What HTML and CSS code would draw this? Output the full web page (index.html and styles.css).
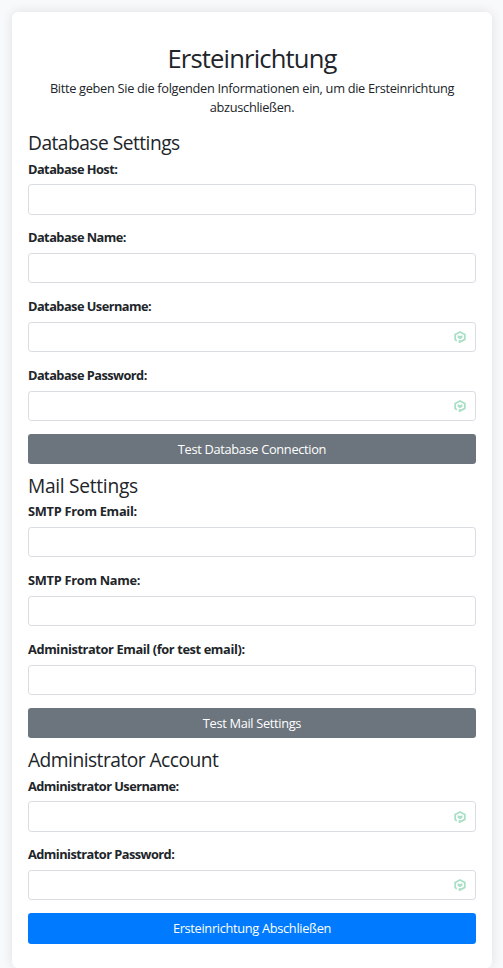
FILE: index.html
```html
<!DOCTYPE html>
<html lang="de">
<head>
<meta charset="utf-8">
<title>Ersteinrichtung</title>
<link rel="stylesheet" href="styles.css">
</head>
<body>
<svg class="sprite" aria-hidden="true">
  <symbol id="key" viewBox="0 0 12 12">
    <path d="M2.9 9.6L1.2 8.6V3.5L6 1l4.8 2.5v4.9L5.6 11.2V8.9" fill="none" stroke="currentColor" stroke-width="1.8"/>
    <path d="M3.6 4.3l2.4.7 2.4-.7v2.5L6 8.2 3.6 6.8z" fill="currentColor"/>
  </symbol>
</svg>
<main class="card">
  <header class="intro">
    <h2>Ersteinrichtung</h2>
    <p>Bitte geben Sie die folgenden Informationen ein, um die Ersteinrichtung abzuschließen.</p>
  </header>
  <form>
    <section>
      <h4>Database Settings</h4>
      <div class="field"><label for="host">Database Host:</label><div class="control"><input id="host" type="text"></div></div>
      <div class="field"><label for="name">Database Name:</label><div class="control"><input id="name" type="text"></div></div>
      <div class="field"><label for="user">Database Username:</label><div class="control"><input id="user" type="text"><svg class="key"><use href="#key"/></svg></div></div>
      <div class="field"><label for="pass">Database Password:</label><div class="control"><input id="pass" type="password"><svg class="key"><use href="#key"/></svg></div></div>
      <button type="button" class="btn">Test Database Connection</button>
    </section>
    <section class="mail">
      <h4>Mail Settings</h4>
      <div class="field"><label for="from">SMTP From Email:</label><div class="control"><input id="from" type="text"></div></div>
      <div class="field"><label for="fromname">SMTP From Name:</label><div class="control"><input id="fromname" type="text"></div></div>
      <div class="field"><label for="test" class="long">Administrator Email (for test email):</label><div class="control"><input id="test" type="text"></div></div>
      <button type="button" class="btn">Test Mail Settings</button>
    </section>
    <section>
      <h4>Administrator Account</h4>
      <div class="field"><label for="admin">Administrator Username:</label><div class="control"><input id="admin" type="text"><svg class="key"><use href="#key"/></svg></div></div>
      <div class="field"><label for="adminpass">Administrator Password:</label><div class="control"><input id="adminpass" type="password"><svg class="key"><use href="#key"/></svg></div></div>
      <button type="submit" class="btn primary">Ersteinrichtung Abschließen</button>
    </section>
  </form>
</main>
</body>
</html>
```
FILE: styles.css
```css
* { box-sizing: border-box; }
html { overflow: hidden; }
body {
  margin: 0;
  padding: 12px 11px 0 12px;
  background: #f8f9fa;
  color: #212529;
  font: 12.8px/19.2px "Segoe UI", "Open Sans", "Noto Sans", sans-serif;
  letter-spacing: -0.32px;
}
.sprite { display: none; }
.card {
  padding: 31.6px 16px 24px;
  background: #fff;
  border-radius: 6.4px;
  box-shadow: 0 0 12px rgba(0, 0, 0, 0.1);
}
h2, h4, p { margin: 0; font-weight: 400; }
.intro { text-align: center; margin-bottom: 12.4px; }
h2 { font-size: 25.6px; line-height: 30.7px; margin-bottom: 4.7px; letter-spacing: -0.85px; }
h4 { padding-top: 1px; font-size: 19.2px; line-height: 23px; margin-bottom: 4.8px; letter-spacing: -0.52px; }
section + section { margin-top: 8.6px; }
.field { padding-top: 1px; margin-bottom: 12.8px; }
label { display: block; margin-bottom: 5.4px; font-weight: 700; letter-spacing: -0.54px; }
.mail h4 { letter-spacing: -0.3px; }
.mail label { letter-spacing: -0.28px; }
.mail .long { letter-spacing: -0.38px; }
.control { position: relative; height: 30.4px; }
input {
  display: block;
  width: 100%;
  height: 100%;
  padding: 4.8px 9.6px;
  border: 1px solid #d9dde1;
  border-radius: 3.2px;
  background: #fff;
  font: inherit;
  outline: 0;
}
.key { position: absolute; right: 10px; top: 9.5px; width: 12px; height: 12px; color: #a9dfc7; }
.btn {
  display: block;
  width: 100%;
  height: 30.4px;
  padding: 1.4px 0 0;
  border: 0;
  border-radius: 3.2px;
  background: #6c757d;
  color: #fff;
  font: inherit;
  letter-spacing: inherit;
}
.primary { background: #007bff; }
```
